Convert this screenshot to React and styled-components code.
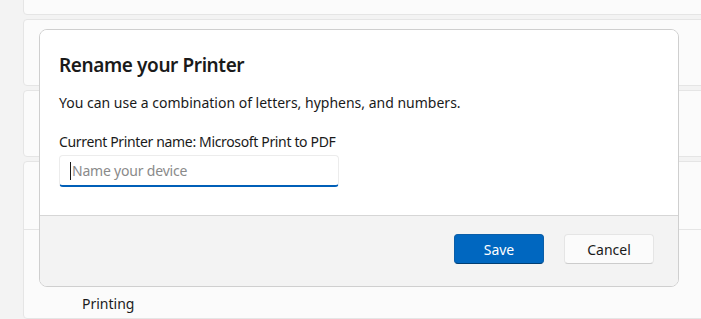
import React from 'react';
import styled, { createGlobalStyle } from 'styled-components';

const GlobalStyle = createGlobalStyle`
  html, body {
    margin: 0;
    padding: 0;
    background: #f3f3f3;
    font-family: "Segoe UI", "Noto Sans", sans-serif;
  }
`;

const Page = styled.div`
  position: relative;
  width: 701px;
  height: 319px;
  overflow: hidden;
  display: flex;
  background: #f3f3f3;
`;

const Sidebar = styled.div`
  width: 23px;
  flex-shrink: 0;
  background: #f3f3f3;
`;

const Content = styled.div`
  flex: 1;
  display: flex;
  flex-direction: column;
  gap: 4px;
  margin-top: -50px;
`;

const Card = styled.div`
  height: ${props => props.h}px;
  flex-shrink: 0;
  width: calc(100% + 20px);
  background: #fbfbfb;
  border: 1px solid #e5e5e5;
  border-radius: 4px;
  box-sizing: border-box;
`;

const GroupCard = styled(Card)`
  height: auto;
  flex: 1;
  display: flex;
  flex-direction: column;
`;

const SubRow = styled.div`
  height: ${props => props.h}px;
  border-bottom: ${props => (props.last ? 'none' : '1px solid #e5e5e5')};
  display: flex;
  align-items: flex-end;
  padding-left: 58px;
  padding-bottom: 3px;
  box-sizing: border-box;
  font-size: 14px;
  color: #1b1b1b;
`;

const Overlay = styled.div`
  position: absolute;
  left: 39px;
  top: 29px;
  width: 640px;
  height: 258px;
  box-sizing: border-box;
  border: 1px solid #cfcfcf;
  border-radius: 8px;
  overflow: hidden;
  display: flex;
  flex-direction: column;
  background: #ffffff;
`;

const DialogBody = styled.div`
  flex: 1;
  padding: 21px 19px 0;
  background: #ffffff;
`;

const Title = styled.h2`
  margin: 0 0 14px;
  font-size: 19px;
  font-weight: 600;
  letter-spacing: -0.4px;
  line-height: 28px;
  color: #1a1a1a;
`;

const Text = styled.p`
  margin: 0 0 ${props => props.mb || 0}px;
  font-size: 14px;
  line-height: 20px;
  letter-spacing: ${props => (props.tight ? '-0.35px' : '0')};
  color: #1a1a1a;
`;

const Input = styled.div`
  margin-top: 3px;
  width: 280px;
  height: 32px;
  box-sizing: border-box;
  border: 1px solid #ececec;
  border-bottom: 2px solid #005fb8;
  border-radius: 4px;
  display: flex;
  align-items: center;
  padding-left: 10px;
  font-size: 14px;
  letter-spacing: -0.2px;
  color: #8a8a8a;
`;

const Caret = styled.span`
  display: inline-block;
  width: 1px;
  height: 18px;
  background: #1a1a1a;
  margin-right: 1px;
`;

const Footer = styled.div`
  height: 71px;
  flex-shrink: 0;
  background: #f3f3f3;
  border-top: 1px solid #d6d6d6;
  display: flex;
  justify-content: flex-end;
  align-items: flex-start;
  gap: 20px;
  padding: 18px 24px 0 0;
  box-sizing: border-box;
`;

const Button = styled.button`
  width: 90px;
  height: 30px;
  border-radius: 4px;
  font-family: inherit;
  font-size: 14px;
  cursor: pointer;
  box-sizing: border-box;
`;

const PrimaryButton = styled(Button)`
  background: #0067c0;
  color: #ffffff;
  border: 1px solid #0a5ea8;
  border-bottom-color: #003e73;
`;

const SecondaryButton = styled(Button)`
  background: #fbfbfb;
  color: #1a1a1a;
  border: 1px solid #e5e5e5;
  border-bottom-color: #cccccc;
`;

export default function App() {
  return (
    <>
      <GlobalStyle />
      <Page>
        <Sidebar />
        <Content>
          <Card h={65} />
          <Card h={67} />
          <Card h={67} />
          <GroupCard>
            <SubRow h={68} />
            <SubRow h={86} last>Printing</SubRow>
          </GroupCard>
        </Content>
        <Overlay>
          <DialogBody>
            <Title>Rename your Printer</Title>
            <Text mb={19}>You can use a combination of letters, hyphens, and numbers.</Text>
            <Text tight>Current Printer name: Microsoft Print to PDF</Text>
            <Input>
              <Caret />
              Name your device
            </Input>
          </DialogBody>
          <Footer>
            <PrimaryButton>Save</PrimaryButton>
            <SecondaryButton>Cancel</SecondaryButton>
          </Footer>
        </Overlay>
      </Page>
    </>
  );
}
